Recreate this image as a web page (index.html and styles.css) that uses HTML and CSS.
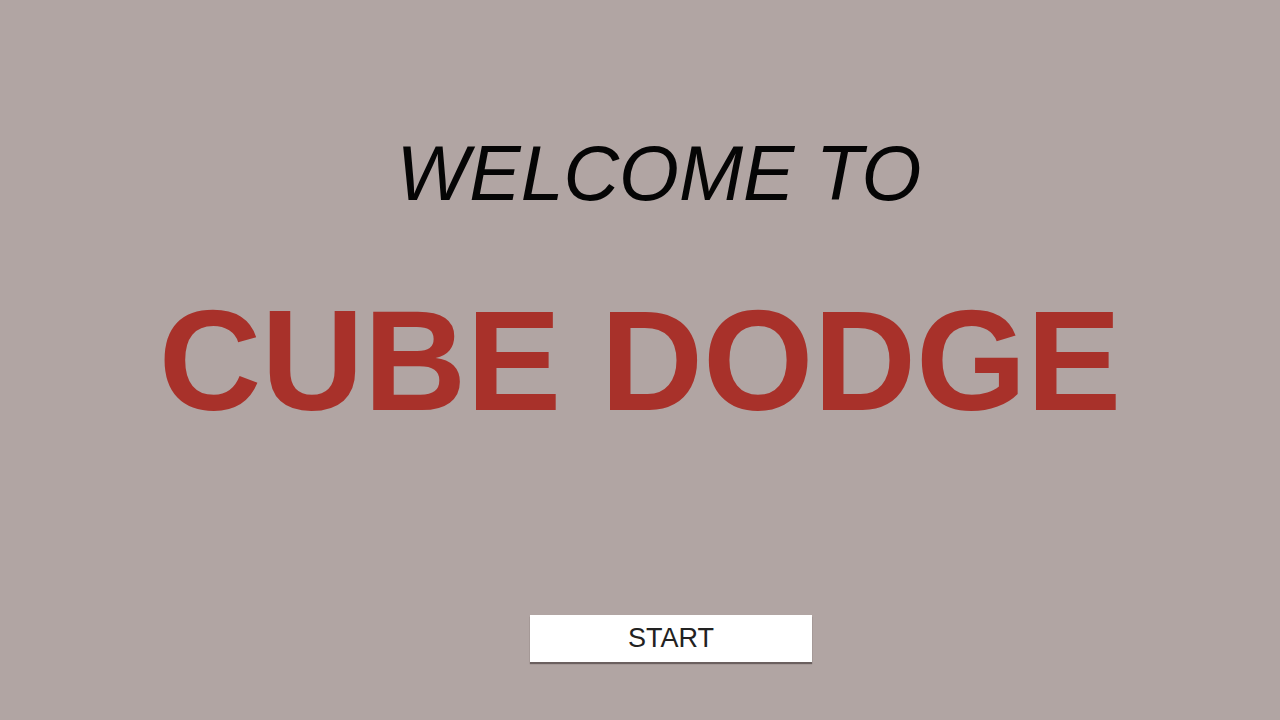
FILE: index.html
```html
<!DOCTYPE html>
<html>
<head>
<meta charset="utf-8">
<link rel="stylesheet" href="styles.css">
</head>
<body>
<main class="screen">
  <h2 class="welcome">WELCOME TO</h2>
  <h1 class="title">CUBE DODGE</h1>
  <button class="start">START</button>
</main>
</body>
</html>
```
FILE: styles.css
```css
html, body {
  margin: 0;
  padding: 0;
  width: 1280px;
  height: 720px;
  overflow: hidden;
  background: #b1a5a3;
}
.screen {
  display: flex;
  flex-direction: column;
  align-items: center;
  padding-top: 135px;
  font-family: "Liberation Sans", Arial, sans-serif;
}
.welcome {
  margin: 0 0 0 38px;
  font-size: 77px;
  line-height: 77px;
  font-weight: normal;
  font-style: italic;
  color: #050505;
}
.title {
  margin: 78px 0 0 0;
  font-size: 142px;
  line-height: 142px;
  font-weight: bold;
  color: #a8312a;
}
.start {
  margin: 183px 0 0 62px;
  width: 282px;
  height: 47px;
  border: none;
  background: #ffffff;
  box-shadow: 0 2px 1px rgba(60, 50, 50, 0.6);
  font-family: "Liberation Sans", Arial, sans-serif;
  font-size: 27px;
  line-height: 47px;
  padding: 0;
  color: #222222;
}
```
